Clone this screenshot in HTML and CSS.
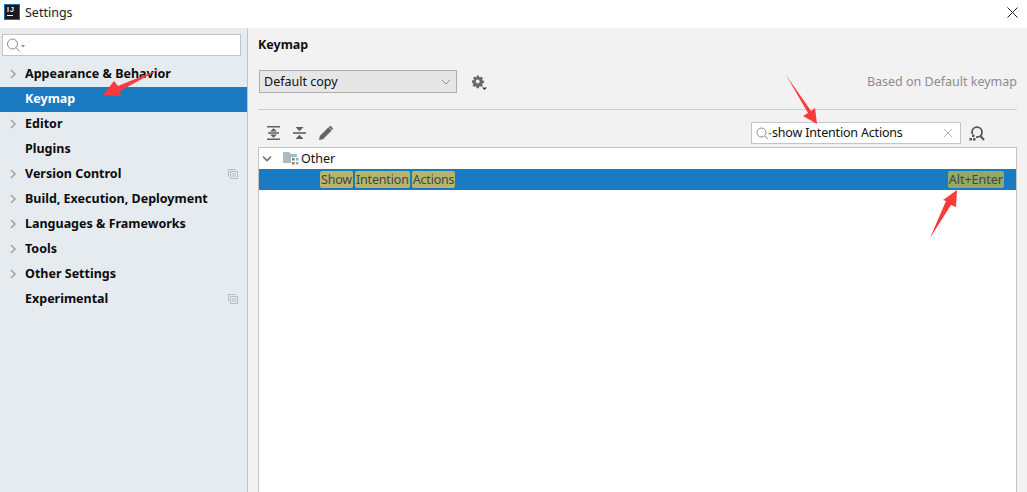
FILE: index.html
```html
<!DOCTYPE html>
<html lang="en">

<head>
    <meta charset="UTF-8">
    <title>Settings</title>
    <link rel="stylesheet" href="styles.css">
</head>

<body>
    <div class="titlebar">
        <div class="logo"><span class="logo-text">IJ</span><span class="logo-line"></span></div>
        <span class="title">Settings</span>
        <svg class="close" width="11" height="11" viewBox="0 0 11 11"><path d="M.5 .5L10.500 10.500M10.500 .5L.5 10.500" stroke="#222" stroke-width="1" fill="none"/></svg>
    </div>

    <div class="window">
        <div class="sidebar">
            <div class="side-search">
                <svg width="20" height="15" viewBox="0 0 20 15"><circle cx="6.500" cy="6" r="5" fill="none" stroke="#8c8c8c"/><path d="M10 9.500L13.500 13.500" stroke="#8c8c8c" fill="none"/><path d="M15 7h4l-2 2.500z" fill="#8c8c8c"/></svg>
            </div>
            <ul class="nav">
                <li class="nav-item"><svg class="chev" width="8" height="10" viewBox="0 0 8 10"><path d="M2 1L6 5L2 9" fill="none" stroke="#a3a3a3" stroke-width="1.6"/></svg>Appearance &amp; Behavior</li>
                <li class="nav-item selected">Keymap</li>
                <li class="nav-item"><svg class="chev" width="8" height="10" viewBox="0 0 8 10"><path d="M2 1L6 5L2 9" fill="none" stroke="#a3a3a3" stroke-width="1.6"/></svg>Editor</li>
                <li class="nav-item">Plugins</li>
                <li class="nav-item"><svg class="chev" width="8" height="10" viewBox="0 0 8 10"><path d="M2 1L6 5L2 9" fill="none" stroke="#a3a3a3" stroke-width="1.6"/></svg>Version Control<svg class="copy" width="10" height="10" viewBox="0 0 10 10"><path d="M.5 7.500V.5h7M2.500 2.500h7v7h-7zM4 5h4M4 7h4" fill="none" stroke="#b4bcc2"/></svg></li>
                <li class="nav-item"><svg class="chev" width="8" height="10" viewBox="0 0 8 10"><path d="M2 1L6 5L2 9" fill="none" stroke="#a3a3a3" stroke-width="1.6"/></svg>Build, Execution, Deployment</li>
                <li class="nav-item"><svg class="chev" width="8" height="10" viewBox="0 0 8 10"><path d="M2 1L6 5L2 9" fill="none" stroke="#a3a3a3" stroke-width="1.6"/></svg>Languages &amp; Frameworks</li>
                <li class="nav-item"><svg class="chev" width="8" height="10" viewBox="0 0 8 10"><path d="M2 1L6 5L2 9" fill="none" stroke="#a3a3a3" stroke-width="1.6"/></svg>Tools</li>
                <li class="nav-item"><svg class="chev" width="8" height="10" viewBox="0 0 8 10"><path d="M2 1L6 5L2 9" fill="none" stroke="#a3a3a3" stroke-width="1.6"/></svg>Other Settings</li>
                <li class="nav-item">Experimental<svg class="copy" width="10" height="10" viewBox="0 0 10 10"><path d="M.5 7.500V.5h7M2.500 2.500h7v7h-7zM4 5h4M4 7h4" fill="none" stroke="#b4bcc2"/></svg></li>
            </ul>
        </div>

        <div class="main">
            <div class="heading">Keymap</div>
            <div class="scheme-row">
                <div class="select"><span>Default copy</span>
                    <svg width="10" height="6" viewBox="0 0 10 6"><path d="M1 1L5 5L9 1" fill="none" stroke="#8a8a8a"/></svg>
                </div>
                <svg class="gear" width="15" height="16" viewBox="0 0 15 16"><path transform="translate(0 1.500) scale(.88)" fill="#6a6a6a" fill-rule="evenodd" d="M5.200 0h2.600l.3 1.700 1.100.5 1.500-1 1.800 1.800-1 1.500.5 1.100 1.700.3v2.600l-1.700.3-.5 1.100 1 1.500-1.800 1.800-1.500-1-1.100.5-.3 1.700H5.200l-.3-1.700-1.100-.5-1.500 1L.5 11.200l1-1.500-.5-1.100L0 8.300V5.700l1.700-.3.5-1.100-1-1.500L3 1l1.500 1 1.100-.5zM6.500 4.500a2.200 2.200 0 1 0 0 4.400 2.200 2.200 0 0 0 0-4.400z"/><path d="M10 13.500h5l-2.500 2.500z" fill="#333"/></svg>
                <span class="based">Based on Default keymap</span>
            </div>
            <div class="rule"></div>
            <div class="tool-row">
                <svg width="14" height="14" viewBox="0 0 14 14"><path d="M0 .8h13M0 13.200h13M1 7h11" stroke="#5f5f5f" fill="none" stroke-width="1.600"/><path d="M6.500 2.200L10 5.500H3zM6.500 11.800L3 8.500h7z" fill="#5f5f5f"/></svg>
                <svg width="14" height="14" viewBox="0 0 14 14"><path d="M0 7h13" stroke="#5f5f5f" fill="none" stroke-width="1.600"/><path d="M6.500 5.200L2.500 1h8zM6.500 8.800l4 4.200h-8z" fill="#5f5f5f"/></svg>
                <svg width="14" height="14" viewBox="0 0 14 14"><path d="M0 14l.8-4L9.500 1.300l3.200 3.200L4 13.200zM10.500.3a1.200 1.200 0 0 1 1.600 0l1.600 1.600a1.200 1.200 0 0 1 0 1.600l-.6.600L9.900 1z" fill="#666"/></svg>
                <div class="filter">
                    <svg width="17" height="13" viewBox="0 0 17 13"><circle cx="5.500" cy="5.500" r="4.500" fill="none" stroke="#8c8c8c"/><path d="M9 9l3 3" stroke="#8c8c8c" fill="none"/><path d="M12 6h4l-2 2z" fill="#8c8c8c"/></svg>
                    <span class="filter-text">show Intention Actions</span>
                    <svg class="clear" width="8" height="8" viewBox="0 0 8 8"><path d="M0 0L8 8M8 0L0 8" stroke="#b9b9b9" fill="none"/></svg>
                </div>
                <svg class="find" width="16" height="15" viewBox="0 0 16 15"><circle cx="8" cy="6.200" r="5" stroke="#555" stroke-width="1.800" fill="none"/><path d="M11.500 10l3.500 4" stroke="#555" stroke-width="2" fill="none"/><path d="M0 8h7v7H0z" fill="#f2f2f2"/><path d="M3 8.500h2.500V11H3zM.5 12h2.500v2.500H.5zM4 12h2.500v2.500H4z" fill="#555"/></svg>
            </div>
            <div class="tree">
                <div class="tree-row">
                    <svg class="down" width="10" height="8" viewBox="0 0 10 8"><path d="M1 1.500L5 5.500L9 1.500" fill="none" stroke="#6e6e6e" stroke-width="1.600"/></svg>
                    <svg class="folder" width="16" height="15" viewBox="0 0 16 15"><path d="M0 1h6l2 2h6v9H0z" fill="#aebac3"/><path d="M8 6h8v9H8z" fill="#fff"/><path d="M9 7h2.500v2.500H9z" fill="#3fa45f"/><path d="M13 7h2.500v2.500H13zM13 11h2.500v2.500H13z" fill="#6fb3d9"/><path d="M9 11h2.500v2.500H9z" fill="#e0603a"/></svg>
                    Other
                </div>
                <div class="tree-row action">
                    <span class="hits"><mark>Show</mark><mark>Intention</mark><mark>Actions</mark></span>
                    <mark class="shortcut">Alt+Enter</mark>
                </div>
            </div>
        </div>
    </div>

    <!-- red annotation arrows -->
    <svg class="arrows" width="1027" height="492" viewBox="0 0 1027 492">
        <path fill="#fb3a3c" d="M103 95L114 81L118 86L160 69L120 91L121 96z"/>
        <path fill="#fb3a3c" d="M786 75L811 111L815 108L817 124L803 116L808 113z"/>
        <path fill="#fb3a3c" d="M957 190L943 200L946 201L930 238L951 205L956 207z"/>
    </svg>
</body>

</html>
```

FILE: styles.css
```css
* {
    box-sizing: border-box;
}

body {
    margin: 0;
    width: 1027px;
    height: 492px;
    overflow: hidden;
    font-family: "Noto Sans", sans-serif;
    font-size: 12.5px;
    color: #111;
    background-color: #f2f2f2;
}

.titlebar {
    height: 28px;
    background-color: white;
    display: flex;
    align-items: center;
    padding: 0 9px 4px 4px;
}

.logo {
    width: 16px;
    height: 16px;
    background-color: #1a1a1f;
    border: 1px solid #1f6fb5;
    color: white;
}

.logo-text {
    display: block;
    font-family: "Liberation Sans", sans-serif;
    font-size: 7px;
    font-weight: bold;
    letter-spacing: 1px;
    line-height: 8px;
    padding: 1px 0 0 2px;
}

.logo-line {
    display: block;
    width: 6px;
    height: 1px;
    background-color: white;
    margin: 1px 0 0 2px;
}

.title {
    margin-left: 5px;
    color: #222;
}

.close {
    margin-left: auto;
}

.window {
    display: flex;
    height: 464px;
}

.sidebar {
    width: 248px;
    flex-shrink: 0;
    background-color: #e6ebf0;
    border-right: 1px solid #c4c4c4;
    padding-top: 6px;
}

.side-search {
    width: 239px;
    height: 22px;
    margin-left: 2px;
    background-color: white;
    border: 1px solid #c4c4c4;
    padding: 3px 0 0 3px;
    display: flex;
}

.nav {
    list-style: none;
    margin: 6px 0 0;
    padding: 0;
}

.nav-item {
    height: 25px;
    line-height: 23px;
    padding-left: 25px;
    font-weight: bold;
    position: relative;
    color: #0c0c0c;
}

.nav-item.selected {
    background-color: #1a7bc2;
    color: white;
}

.chev {
    position: absolute;
    left: 9px;
    top: 7px;
}

.copy {
    position: absolute;
    left: 228px;
    top: 7px;
}

.main {
    flex: 1;
    padding: 0 10px;
}

.heading {
    font-weight: bold;
    margin-top: 8px;
    height: 18px;
    line-height: 18px;
}

.scheme-row {
    display: flex;
    align-items: center;
    margin: 16px 0 0 1px;
    height: 23px;
}

.select {
    width: 198px;
    height: 23px;
    line-height: 20px;
    background-color: #e6e6e6;
    border: 1px solid #aeaeae;
    display: flex;
    align-items: center;
    justify-content: space-between;
    padding: 0 5px 0 4px;
}

.gear {
    margin-left: 15px;
}

.based {
    margin-left: auto;
    color: #8c8c8c;
}

.rule {
    height: 1px;
    background-color: #cdcdcd;
    margin-top: 16px;
}

.tool-row {
    display: flex;
    align-items: center;
    height: 37px;
    padding: 9px 0 0 9px;
    gap: 12px;
}

.filter {
    margin-left: auto;
    width: 210px;
    height: 22px;
    background-color: white;
    border: 1px solid #c4c4c4;
    display: flex;
    align-items: center;
    padding: 0 8px 0 4px;
}

.filter-text {
    margin-left: -1px;
    letter-spacing: -0.18px;
    padding-bottom: 2px;
}

.clear {
    margin-left: auto;
}

.find {
    margin: 0 32px 0 -4px;
}

.tree {
    background-color: white;
    border: 1px solid #c4c4c4;
    height: 360px;
}

.tree-row {
    height: 21px;
    display: flex;
    align-items: center;
}

.down {
    margin-left: 3px;
}

.folder {
    margin: 0 2px 0 11px;
}

.action {
    background-color: #1a7bc2;
    color: #333;
    justify-content: space-between;
    padding: 0 12px 0 61px;
}

.hits {
    display: flex;
    gap: 2px;
    letter-spacing: -0.18px;
}

mark {
    background-color: #b5b56d;
    color: #444;
    border-radius: 2px;
    padding: 0 1px;
    line-height: 17px;
}

.shortcut {
    background-color: #94a868;
}

.arrows {
    position: absolute;
    left: 0;
    top: 0;
    pointer-events: none;
}
```
